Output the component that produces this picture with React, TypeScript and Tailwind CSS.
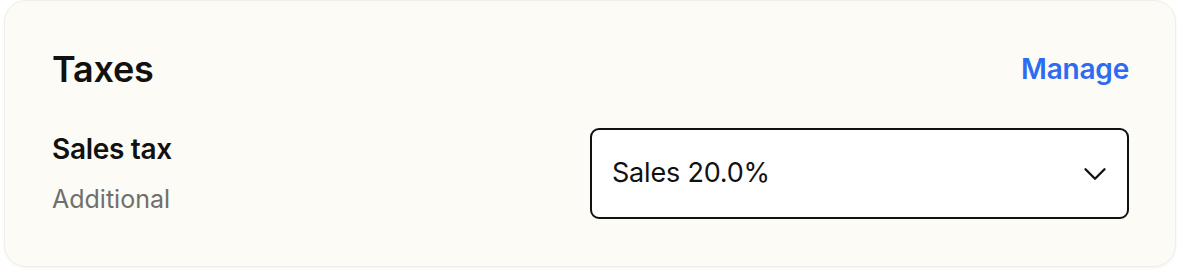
import { ChevronDown } from 'lucide-react';

// Tax settings card
export default function App() {
  return (
    <div className="w-[1180px] h-[276px] bg-white pl-[4px] pr-[4px] font-['Inter',sans-serif]">
      <div className="h-[267px] rounded-[22px] bg-[#fcfbf6] border border-[#f0eee8] shadow-[0_1px_3px_rgba(0,0,0,0.05)] pl-[47px] pr-[46px] pt-[44px]">
        <div className="flex items-center justify-between h-[48px]">
          <h2 className="text-[36px] font-semibold text-[#111] tracking-[-0.2px]">Taxes</h2>
          <button className="text-[28px] font-semibold text-[#2d6bf0] tracking-[-0.2px]">Manage</button>
        </div>
        <div className="flex items-start justify-between mt-[35px]">
          <div className="pt-[5px]">
            <div className="text-[28px] font-semibold text-[#111] leading-[32px] tracking-[-0.3px]">Sales tax</div>
            <div className="text-[25px] text-[#6f6f6b] leading-[30px] mt-[19px]">Additional</div>
          </div>
          <div className="w-[539px] h-[91px] bg-white border-2 border-[#111] rounded-[9px] flex items-center justify-between pl-[20px] pr-[13px]">
            <span className="text-[27px] text-[#111] tracking-[-0.2px]">Sales 20.0%</span>
            <ChevronDown className="w-[38px] h-[38px] text-[#111]" strokeWidth={1.5} />
          </div>
        </div>
      </div>
    </div>
  );
}
